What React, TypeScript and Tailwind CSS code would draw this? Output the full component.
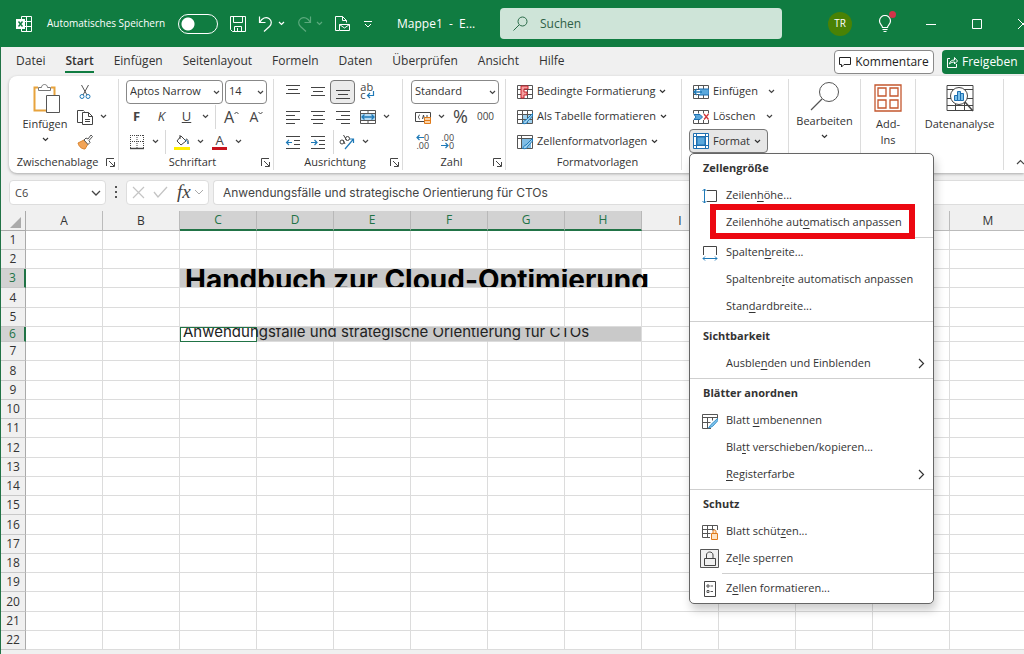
import React from 'react';
import clsx from 'clsx';

type Children = { children?: React.ReactNode };

const Icon: React.FC<Children & { w?: number; h?: number; className?: string }> = ({ w = 16, h = 16, className, children }) => (
  <svg
    width={w}
    height={h}
    viewBox={`0 0 ${w} ${h}`}
    fill="none"
    stroke="currentColor"
    aria-hidden="true"
    className={clsx('shrink-0', className)}
  >
    {children}
  </svg>
);

const Chevron: React.FC<{ className?: string }> = ({ className }) => (
  <Icon w={7} h={5} className={className}>
    <path d="M1 1l2.5 2.5L6 1" strokeWidth="1.2" />
  </Icon>
);

/* ---------- title bar ---------- */

const TitleBar: React.FC = () => (
  <header className="flex h-[47px] shrink-0 items-center bg-[#107c41] pl-4 text-white">
    <Icon className="mr-[15px]">
      <path d="M5.5.5h10v15h-10zM10.5.5v15M5.5 5.5h10M5.5 10.5h10" />
      <rect x="0" y="3" width="9" height="10" fill="#fff" stroke="none" />
      <path d="M2.5 5.500l4 5M6.500 5.500l-4 5" stroke="#107c41" strokeWidth="1.4" />
    </Icon>
    <label htmlFor="autosave" className="w-[131px] whitespace-nowrap text-[10px] font-medium">Automatisches Speichern</label>
    <input
      id="autosave"
      type="checkbox"
      role="switch"
      className="h-5 w-10 shrink-0 appearance-none rounded-full border border-white bg-[radial-gradient(circle_at_9px_9px,white_6px,transparent_7px)]"
    />
    <button aria-label="Speichern" className="ml-3">
      <Icon>
        <path d="M.5.5h15v15h-13l-2-2zM3.500.500v6h9v-6M4.500 15.500v-5h7v5M7.500 12v3" />
      </Icon>
    </button>
    <button aria-label="Rückgängig" className="ml-3 flex items-center gap-1">
      <Icon>
        <path d="M1.500.500v6h6M2 6c2-4 6-5.500 9-3.500s3 5.500.5 8L6 15.500" strokeWidth="1.2" />
      </Icon>
      <Chevron />
    </button>
    <button aria-label="Wiederholen" className="ml-[11px] flex items-center gap-1 text-[#5ba97d]">
      <Icon>
        <path d="M14.500.500v6h-6M14 6c-2-4-6-5.500-9-3.500s-3 5.500-.5 8L10 15.500" strokeWidth="1.2" />
      </Icon>
      <Chevron />
    </button>
    <button aria-label="Per E-Mail senden" className="ml-3">
      <Icon>
        <path d="M4 14.500H.500v-14h7l4 4v2M7.500.500v4h4M4.500 8.500h10v6h-10zM4.500 8.500l5 3.500 5-3.500" />
      </Icon>
    </button>
    <button aria-label="Schnellzugriff anpassen" className="ml-[13px]">
      <Icon w={8} h={8}>
        <path d="M0 1.500h8M1 4l3 3 3-3" />
      </Icon>
    </button>
    <span className="ml-[25px] w-[103px] whitespace-pre text-[12px]">Mappe1  -  E...</span>
    <div className="flex h-[31px] w-[282px] items-center gap-3 rounded-[4px] bg-[#cee4d8] pl-[13px] text-[#2a6a48]">
      <Icon w={15} h={15}>
        <circle cx="9.500" cy="5.500" r="4.500" />
        <path d="M6 9L.5 14.500" />
      </Icon>
      <input
        aria-label="Suchen"
        placeholder="Suchen"
        className="min-w-0 flex-1 bg-transparent text-[12px] outline-none placeholder:text-[#2f6047]"
      />
    </div>
    <div className="ml-auto flex items-center">
      <button className="size-6 rounded-full bg-[#498205] text-[10px]">TR</button>
      <button aria-label="Neuigkeiten" className="relative ml-[26px]">
        <Icon w={14} h={18}>
          <path d="M4.500 12.500c0-2-3-3-3-6.500a5.500 5.500 0 0 1 11 0c0 3.500-3 4.500-3 6.500zM4.500 14.500h5M5.500 16.500h3" strokeWidth="1.2" />
        </Icon>
        <span className="absolute -top-1 -right-1 size-[7px] rounded-full bg-[#d13449]" />
      </button>
      <button aria-label="Minimieren" className="ml-4 flex w-[46px] justify-center">
        <Icon w={10} h={10}><path d="M0 5.500h10" /></Icon>
      </button>
      <button aria-label="Maximieren" className="flex w-[46px] justify-center">
        <Icon w={10} h={10}><path d="M.5.5h9v9h-9z" /></Icon>
      </button>
      <button aria-label="Schließen" className="flex w-6 justify-start overflow-hidden pl-[18px]">
        <Icon w={10} h={10}><path d="M0 0l10 10M10 0L0 10" /></Icon>
      </button>
    </div>
  </header>
);

/* ---------- tabs ---------- */

const tabs = ['Datei', 'Start', 'Einfügen', 'Seitenlayout', 'Formeln', 'Daten', 'Überprüfen', 'Ansicht', 'Hilfe'];

const TabRow: React.FC = () => (
  <nav className="flex h-[29px] shrink-0 items-center pt-px pl-[15px] text-[12px] text-[#333]">
    <div className="flex gap-5">
      {tabs.map((tab) => (
        <a
          key={tab}
          href="#"
          className={clsx('h-[22px] leading-[20px]', tab === 'Start' && 'border-b-2 border-[#107c41] font-semibold')}
        >
          {tab}
        </a>
      ))}
    </div>
    <button className="ml-auto flex h-6 w-[100px] items-center justify-center gap-1 rounded-[4px] border border-[#8a8a8a] bg-white text-[#222]">
      <Icon w={12} h={12}><path d="M.5 1.500h11v7H5L2.500 11V8.500h-2z" /></Icon>
      Kommentare
    </button>
    <button className="ml-2 flex h-6 w-[82px] items-center gap-1 rounded-l-[4px] bg-[#107c41] pl-1 text-white">
      <Icon w={12} h={12}>
        <path d="M4 2.500H1.500v9h9V8M3.500 8c.5-3 2.500-4 5-4V1.500l3 3.500-3 3V6c-2 0-3.500.5-5 2z" />
      </Icon>
      Freigeben
    </button>
  </nav>
);

/* ---------- ribbon ---------- */

const Row: React.FC<Children> = ({ children }) => <div className="flex h-[25px] items-center">{children}</div>;

const Tool: React.FC<Children & { label: string; active?: boolean }> = ({ label, active, children }) => (
  <button
    aria-label={label}
    className={clsx(
      'flex h-6 w-[25px] shrink-0 items-center justify-center text-[#444]',
      active && 'rounded-[4px] border border-[#777] bg-[#ebebeb]'
    )}
  >
    {children}
  </button>
);

const Drop: React.FC<{ label: string }> = ({ label }) => (
  <button aria-label={label} className="flex h-6 w-[13px] shrink-0 items-center justify-center text-[#444]">
    <Chevron />
  </button>
);

const Separator: React.FC = () => <div className="mx-[3px] h-6 w-px bg-[#d8d8d8]" />;

const Select: React.FC<{ label: string; value: string; className: string }> = ({ label, value, className }) => (
  <div className={clsx('relative h-6', className)}>
    <select
      aria-label={label}
      className="block h-full w-full appearance-none rounded-[4px] border border-[#888] bg-white pl-[3px] text-[11px] text-[#333]"
    >
      <option>{value}</option>
    </select>
    <Chevron className="pointer-events-none absolute top-[10px] right-[3px] text-[#444]" />
  </div>
);

const Group: React.FC<Children & { label?: string; className: string; launcher?: boolean }> = ({
  label,
  className,
  launcher,
  children,
}) => (
  <section className={clsx('my-[3px] shrink-0 border-r border-[#dcdcdc]', className)}>
    <div className="h-[75px]">{children}</div>
    {label && (
      <div className="flex h-[17px] items-center pr-[3px] text-[11px] text-[#333]">
        <span className="flex-1 text-center">{label}</span>
        {launcher && (
          <button aria-label={`${label} öffnen`}>
            <Icon w={9} h={9} className="text-[#444]">
              <path d="M.5 8V.5H8M3 3l5 5M8.500 4v4.500H4" />
            </Icon>
          </button>
        )}
      </div>
    )}
  </section>
);

const Lines: React.FC<{ rows: [number, number, number][] }> = ({ rows }) => (
  <Icon>
    {rows.map(([y, from, to]) => (
      <path key={y} d={`M${from} ${y + 0.5}H${to}`} />
    ))}
  </Icon>
);

const GridLines: React.FC = () => <path d="M.5 1.500h15v13H.5zM.5 5.500h15M.5 10.500h15M5.500 1.500v13M10.500 1.500v13" stroke="#555" />;

const Brush: React.FC = () => (
  <path d="M15.500 4.500L9 11c-2 0-2 2-3.500 3.500 3 .5 5 0 5-2L15.500 7z" fill="#9fd0ee" stroke="#1f7ab8" />
);

const ConditionalIcon = () => (
  <Icon>
    <GridLines />
    <path d="M4 2v12h3v-3h3V8H7V5h4V2z" fill="#f4a0a0" stroke="#c8232c" />
  </Icon>
);

const TableFormatIcon = () => (
  <Icon>
    <path d="M6 6h9v8H6z" fill="#9fd0ee" stroke="none" />
    <GridLines />
    <Brush />
  </Icon>
);

const CellStyleIcon = () => (
  <Icon>
    <path d="M4 4h10v10H4z" fill="#7fbce4" stroke="none" />
    <path d="M.5 1.500h15v13H.5zM.5 4.500h15M4.500 1.500v13" stroke="#555" />
    <Brush />
  </Icon>
);

const InsertCellsIcon = () => (
  <Icon>
    <GridLines />
    <path d="M6 5h10v6H6z" fill="#5ba8dc" stroke="#1f6fb0" />
    <path d="M1 6h6v4H1z" fill="#fff" stroke="none" />
    <path d="M9 8H1M4 5L1 8l3 3" stroke="#1f7ab8" strokeWidth="1.4" />
  </Icon>
);

const DeleteCellsIcon = () => (
  <Icon>
    <path d="M.5 1.500h15M.5 14.500h15M.5 1.500v3M5.500 1.500v3M10.500 1.500v3M15.500 1.500v3M.5 11v3.500M5.500 11v3.500M10.500 11v3.500M15.500 11v3.500" stroke="#555" />
    <path d="M1 5.500h6L9.500 8 7 10.500H1L3 8z" fill="#5ba8dc" stroke="#1f6fb0" />
    <path d="M11 5l4.500 5.500M15.500 5L11 10.500" stroke="#d13438" strokeWidth="1.3" />
  </Icon>
);

const FormatCellsIcon = () => (
  <Icon>
    <path d="M.5.5h15v15H.5z" fill="#fff" stroke="#1f6fb0" />
    <path d="M.5 3.500h15M.5 12.500h15M3.500.5v15M12.500.5v15" stroke="#1f6fb0" />
    <path d="M4 4h8v8H4z" fill="#5ba8dc" stroke="#1f6fb0" />
  </Icon>
);

const StyleButton: React.FC<{ icon: React.ReactNode; label: string }> = ({ icon, label }) => (
  <Row>
    <button className="flex items-center gap-1 whitespace-nowrap text-[11px] text-[#333]">
      {icon}
      {label}
      <Chevron />
    </button>
  </Row>
);

const Clipboard: React.FC = () => (
  <Group label="Zwischenablage" launcher className="w-[110px]">
    <div className="flex pl-3">
      <button className="flex w-12 flex-col items-center pt-[5px] text-[11px] text-[#333]">
        <Icon w={28} h={30} className="ml-1">
          <path d="M5 3.500H1.500v23H14M18 3.500h3.500V11" stroke="#e8a33d" strokeWidth="2" />
          <path d="M5.500 6.500v-3h3c0-4 6-4 6 0h3v3z" fill="#fff" stroke="#777" />
          <path d="M13.500 11.500h13v17h-13z" fill="#fff" stroke="#555" />
        </Icon>
        <span className="mt-px leading-[18px]">Einfügen</span>
        <Chevron className="mt-1" />
      </button>
      <div className="pl-[3px]">
        <Row>
          <Tool label="Ausschneiden">
            <Icon>
              <path d="M4.500 1L10 11M11.500 1L6 11" stroke="#555" />
              <circle cx="5" cy="12.500" r="2" stroke="#1f7ab8" />
              <circle cx="11" cy="12.500" r="2" stroke="#1f7ab8" />
            </Icon>
          </Tool>
        </Row>
        <Row>
          <Tool label="Kopieren">
            <Icon>
              <path d="M5 13.500H.500v-12h6l1 1M5.500 3.500h6l4 4v8h-10zM11.500 3.500v4h4M8 10.500h5M8 12.500h5" />
            </Icon>
          </Tool>
          <Drop label="Kopieroptionen" />
        </Row>
        <Row>
          <Tool label="Format übertragen">
            <Icon>
              <path d="M1 9l6-3 4 4-3 5c-3 0-6-2-7-6z" fill="#f2a457" stroke="#d9822b" />
              <path d="M7 6l2-2 2 1 3-4 1.500 1.500-3.500 4 1 2-2 2z" fill="#fff" stroke="#555" />
            </Icon>
          </Tool>
        </Row>
      </div>
    </div>
  </Group>
);

const FontGroup: React.FC = () => (
  <Group label="Schriftart" launcher className="w-[155px] pl-[5px]">
    <Row>
      <Select label="Schriftart" value="Aptos Narrow" className="ml-0.5 w-[97px]" />
      <Select label="Schriftgrad" value="14" className="ml-0.5 w-[42px]" />
    </Row>
    <Row>
      <Tool label="Fett"><span className="text-[13px] font-bold">F</span></Tool>
      <Tool label="Kursiv"><span className="text-[13px] italic">K</span></Tool>
      <Tool label="Unterstrichen"><span className="text-[13px] underline">U</span></Tool>
      <Drop label="Unterstreichungsart" />
      <Separator />
      <Tool label="Schrift vergrößern">
        <span className="text-[16px]">A</span>
        <Icon w={5} h={12}><path d="M.5 3L2.500 1l2 2" /></Icon>
      </Tool>
      <Tool label="Schrift verkleinern">
        <span className="text-[14px]">A</span>
        <Icon w={5} h={12}><path d="M.5 1l2 2 2-2" /></Icon>
      </Tool>
    </Row>
    <Row>
      <Tool label="Rahmen">
        <Icon>
          <path d="M1.500 1v13M14.500 1v13M1 1.500h13M8 1v13M1 7.500h13" strokeDasharray="1 1" />
          <path d="M1 14.500h14" strokeWidth="1.4" />
        </Icon>
      </Tool>
      <Drop label="Rahmenart" />
      <Separator />
      <Tool label="Füllfarbe">
        <Icon>
          <path d="M7 2l5 5-5 4-4-4zM6 1v4M12 5c2 0 2.500 2 2 5" />
          <path d="M11 6c2 0 3 2 3 4" stroke="#1f7ab8" />
          <path d="M0 14.500h16" stroke="#ffee00" strokeWidth="3" />
        </Icon>
      </Tool>
      <Drop label="Füllfarbe wählen" />
      <Tool label="Schriftfarbe">
        <span className="border-b-[3px] border-[#c8141e] px-[3px] text-[13px] leading-[14px]">A</span>
      </Tool>
      <Drop label="Schriftfarbe wählen" />
    </Row>
  </Group>
);

const Alignment: React.FC = () => (
  <Group label="Ausrichtung" launcher className="w-[129px] pl-[6px]">
    <Row>
      <Tool label="Oben ausrichten"><Lines rows={[[1, 1, 15], [5, 3, 13], [9, 1, 15]]} /></Tool>
      <Tool label="Zentriert ausrichten"><Lines rows={[[3, 1, 15], [7, 3, 13], [11, 1, 15]]} /></Tool>
      <Tool label="Unten ausrichten" active><Lines rows={[[6, 1, 15], [10, 3, 13], [14, 1, 15]]} /></Tool>
      <Tool label="Textumbruch">
        <div className="text-left text-[11px] leading-[8px]">
          ab
          <span className="flex">
            c
            <Icon w={9} h={9}>
              <path d="M7.500 0v4.500h-6M4 2L1.500 4.500 4 7" stroke="#1f7ab8" strokeWidth="1.2" />
            </Icon>
          </span>
        </div>
      </Tool>
    </Row>
    <Row>
      <Tool label="Linksbündig"><Lines rows={[[2, 1, 15], [6, 1, 10], [10, 1, 15], [14, 1, 10]]} /></Tool>
      <Tool label="Zentriert"><Lines rows={[[2, 1, 15], [6, 3, 13], [10, 1, 15], [14, 3, 13]]} /></Tool>
      <Tool label="Rechtsbündig"><Lines rows={[[2, 1, 15], [6, 6, 15], [10, 1, 15], [14, 6, 15]]} /></Tool>
      <Tool label="Verbinden und zentrieren">
        <Icon>
          <path d="M1 4.500h14v7H1z" fill="#b5daf2" stroke="none" />
          <path d="M.5 1.500h15v13H.5zM.5 4.500h15M.5 11.500h15M8 1.500v3M8 11.500v3" stroke="#555" />
          <path d="M2 8h12M4.500 5.500L2 8l2.500 2.500M11.500 5.500L14 8l-2.500 2.500" stroke="#1f7ab8" strokeWidth="1.3" />
        </Icon>
      </Tool>
      <Drop label="Verbindungsoptionen" />
    </Row>
    <Row>
      <Tool label="Einzug verkleinern">
        <Icon>
          <path d="M1 2.500h14M9 6.500h6M9 10.500h6M1 14.500h14" />
          <path d="M7 8.500H1.500M4 6L1.500 8.500 4 11" stroke="#1f7ab8" strokeWidth="1.2" />
        </Icon>
      </Tool>
      <Tool label="Einzug vergrößern">
        <Icon>
          <path d="M1 2.500h14M9 6.500h6M9 10.500h6M1 14.500h14" />
          <path d="M1 8.500h6M4.500 6L7 8.500 4.500 11" stroke="#1f7ab8" strokeWidth="1.2" />
        </Icon>
      </Tool>
      <div className="ml-[3px] h-6 w-px bg-[#d8d8d8]" />
      <Tool label="Orientierung">
        <Icon>
          <path d="M6 15L14.500 5M14.500 9V5h-4" stroke="#1f7ab8" strokeWidth="1.2" />
          <circle cx="3" cy="8" r="2" />
          <path d="M4 6l2 4" />
          <circle cx="8.500" cy="4.500" r="2" />
          <path d="M4.500 1l3 5" />
        </Icon>
      </Tool>
      <Drop label="Orientierung wählen" />
    </Row>
  </Group>
);

const NumberGroup: React.FC = () => (
  <Group label="Zahl" launcher className="w-[103px] pl-[7px]">
    <Row>
      <Select label="Zahlenformat" value="Standard" className="ml-px w-[88px]" />
    </Row>
    <Row>
      <Tool label="Buchhaltungszahlenformat">
        <Icon>
          <path d="M.5 3.500h15v9H.5z" />
          <path d="M5 6c-2 0-2 4 0 4M7.500 10l1-4 1 4M12 6v4" />
          <path d="M9.500 8.500h6v6h-6zM9.500 11.500h6" fill="#fbd3a8" stroke="#e07b1a" />
        </Icon>
      </Tool>
      <Drop label="Währung wählen" />
      <Tool label="Prozentformat"><span className="text-[18px]">%</span></Tool>
      <Tool label="1000er-Trennzeichen"><span className="text-[10px]">000</span></Tool>
    </Row>
    <Row>
      <Tool label="Dezimalstelle hinzufügen">
        <div className="text-right text-[9px] leading-[8px]">
          <span className="flex items-center">
            <Icon w={8} h={7}><path d="M8 3.500H1M3.500 1L1 3.500 3.500 6" stroke="#1f7ab8" strokeWidth="1.2" /></Icon>0
          </span>
          .00
        </div>
      </Tool>
      <Tool label="Dezimalstelle entfernen">
        <div className="text-right text-[9px] leading-[8px]">
          .00
          <span className="flex items-center">
            <Icon w={8} h={7}><path d="M0 3.500h7M4.500 1L7 3.500 4.500 6" stroke="#1f7ab8" strokeWidth="1.2" /></Icon>0
          </span>
        </div>
      </Tool>
    </Row>
  </Group>
);

/* ---------- format menu ---------- */

const RowHeightIcon = () => (
  <Icon>
    <path d="M5 2.500h9.500v11H5" stroke="#444" />
    <path d="M2.500 1v14M.5 3l2-2 2 2M.5 13l2 2 2-2" stroke="#1f7ab8" />
  </Icon>
);

const ColumnWidthIcon = () => (
  <Icon>
    <path d="M1.500 10V1.500h13V10" stroke="#444" />
    <path d="M1 13.500h14M3 11.500l-2 2 2 2M13 11.500l2 2-2 2" stroke="#1f7ab8" />
  </Icon>
);

const RenameIcon = () => (
  <Icon>
    <path d="M9 15.500H.5v-14h15V6M.5 4.500h15M.5 9.500h8M5.500 4.500v11M10.500 4.500v3" stroke="#555" />
    <path d="M15.500 5.500L9 11.500 6.500 15l4-1.500 5.500-6z" fill="#7cc0ea" stroke="#3d95cc" />
  </Icon>
);

const ProtectIcon = () => (
  <Icon>
    <path d="M8 13.500H.5v-12h15V6M.5 5.500h12M.5 9.500h8M5.500 1.500v12M10.500 1.500v5" stroke="#555" />
    <path d="M9.500 9.500h6v6h-6zM11 9.500V7.500c0-2 3-2 3 0v2" fill="#fde3c4" stroke="#e07b1a" />
  </Icon>
);

const LockIcon = () => (
  <Icon w={20} h={20}>
    <path d="M.5.5h18v18H.5z" fill="#f0f0f0" stroke="#555" />
    <path d="M4.500 9.500h11v7h-11zM6.500 9.500V6c0-4 6.500-4 6.500 0v3.500" stroke="#444" />
  </Icon>
);

const FormatDialogIcon = () => (
  <Icon>
    <path d="M2.500.5h11v15h-11z" stroke="#444" />
    <path d="M5 4h2v2H5zM5 9.500h2v2H5zM8.500 5h2.500M8.500 10.500h2.500" stroke="#555" />
  </Icon>
);

const MenuTitle: React.FC<Children> = ({ children }) => (
  <h3 className="flex h-7 items-center pl-[13px] text-[11px] font-bold">{children}</h3>
);

type MenuItemProps = { icon?: React.ReactNode; label: [string, string, string]; submenu?: boolean; marked?: boolean };

// label is split around the underlined access key
const MenuItem: React.FC<MenuItemProps> = ({ icon, label: [before, key, after], submenu, marked }) => (
  <button role="menuitem" className="relative flex h-[27px] w-full items-center whitespace-nowrap pr-2 text-[11px]">
    <span className="ml-1 flex w-8 justify-center">{icon}</span>
    <span className="flex-1 text-left">
      {before}
      <u className="underline-offset-2">{key}</u>
      {after}
    </span>
    {submenu && (
      <Icon w={7} h={11}><path d="M1 1l4.500 4.500L1 10" strokeWidth="1.2" /></Icon>
    )}
    {marked && <span className="absolute -top-[5px] right-[18px] -bottom-[3px] left-5 border-[6px] border-[#ec0811]" />}
  </button>
);

const MenuSection: React.FC<Children> = ({ children }) => (
  <div className="border-[#cfcfcf] pb-px not-first:border-t">{children}</div>
);

const MenuDivider: React.FC = () => <div className="my-px ml-8 h-px bg-[#cfcfcf]" />;

const FormatMenu: React.FC = () => (
  <div
    role="menu"
    className="absolute top-full left-0 z-10 w-[245px] rounded-[5px] border border-[#666] bg-white text-[#333] shadow-[2px_6px_10px_rgba(0,0,0,0.2)]"
  >
    <MenuSection>
      <MenuTitle>Zellengröße</MenuTitle>
      <MenuItem icon={<RowHeightIcon />} label={['Zeilen', 'h', 'öhe...']} />
      <MenuItem label={['Zeilenhöhe aut', 'o', 'matisch anpassen']} marked />
      <MenuDivider />
      <MenuItem icon={<ColumnWidthIcon />} label={['Spalten', 'b', 'reite...']} />
      <MenuItem label={['Spaltenbre', 'i', 'te automatisch anpassen']} />
      <MenuItem label={['Stan', 'd', 'ardbreite...']} />
    </MenuSection>
    <MenuSection>
      <MenuTitle>Sichtbarkeit</MenuTitle>
      <MenuItem label={['Ausble', 'n', 'den und Einblenden']} submenu />
    </MenuSection>
    <MenuSection>
      <MenuTitle>Blätter anordnen</MenuTitle>
      <MenuItem icon={<RenameIcon />} label={['Blatt ', 'u', 'mbenennen']} />
      <MenuItem label={['Bla', 't', 't verschieben/kopieren...']} />
      <MenuItem label={['', 'R', 'egisterfarbe']} submenu />
    </MenuSection>
    <MenuSection>
      <MenuTitle>Schutz</MenuTitle>
      <MenuItem icon={<ProtectIcon />} label={['Blatt schüt', 'z', 'en...']} />
      <MenuItem icon={<LockIcon />} label={['Ze', 'l', 'le sperren']} />
      <MenuDivider />
      <MenuItem icon={<FormatDialogIcon />} label={['Z', 'e', 'llen formatieren...']} />
    </MenuSection>
  </div>
);

const CellsGroup: React.FC = () => (
  <Group className="w-[107px] pl-[7px] text-[11px] text-[#333]">
    <Row>
      <button className="flex w-[76px] items-center gap-1 pl-1"><InsertCellsIcon />Einfügen</button>
      <Drop label="Einfügeoptionen" />
    </Row>
    <Row>
      <button className="flex w-[74px] items-center gap-1 pl-1"><DeleteCellsIcon />Löschen</button>
      <Drop label="Löschoptionen" />
    </Row>
    <div className="relative">
      <button
        aria-expanded="true"
        className="flex h-6 w-[79px] items-center gap-1 rounded-[4px] border border-[#777] bg-[#e6e6e6] pl-[3px]"
      >
        <FormatCellsIcon />
        Format
        <Chevron />
      </button>
      <FormatMenu />
    </div>
  </Group>
);

const Ribbon: React.FC = () => (
  <div className="ml-2 flex h-[97px] shrink-0 rounded-l-[8px] bg-white shadow-[0_1px_3px_rgba(0,0,0,0.3)]">
    <Clipboard />
    <FontGroup />
    <Alignment />
    <NumberGroup />
    <Group label="Formatvorlagen" className="w-[176px] pl-[11px]">
      <StyleButton icon={<ConditionalIcon />} label="Bedingte Formatierung" />
      <StyleButton icon={<TableFormatIcon />} label="Als Tabelle formatieren" />
      <StyleButton icon={<CellStyleIcon />} label="Zellenformatvorlagen" />
    </Group>
    <CellsGroup />
    <Group className="w-[72px]">
      <button className="flex w-full flex-col items-center pt-[3px] text-[11px] text-[#333]">
        <Icon w={30} h={30}>
          <circle cx="19" cy="10" r="9.500" stroke="#555" />
          <path d="M12 17L1 28" stroke="#555" strokeWidth="1.3" />
        </Icon>
        <span className="leading-[18px]">Bearbeiten</span>
        <Chevron className="mt-1" />
      </button>
    </Group>
    <Group className="w-[55px]">
      <button className="flex w-full flex-col items-center gap-1 pt-[5px] text-[11px] leading-4 text-[#333]">
        <Icon w={28} h={28}>
          <path d="M1 1h26v26H1zM4 4h8v8H4zM16 4h8v8h-8zM4 16h8v8H4zM16 16h8v8h-8z" stroke="#c4572e" strokeWidth="1.3" />
        </Icon>
        <span>Add-<br />Ins</span>
      </button>
    </Group>
    <Group className="w-[88px]">
      <button className="flex w-full flex-col items-center gap-1 pt-[5px] text-[11px] leading-4 text-[#333]">
        <Icon w={28} h={28}>
          <path d="M1 1.500h26v25H1zM1 5.500h26M1 14.500h26M1 21.500h26M9.500 19v8M18.500 19v8" stroke="#444" />
          <circle cx="13" cy="12" r="8.500" fill="#fff" stroke="#444" />
          <path d="M19 18l8 9" stroke="#444" strokeWidth="1.500" />
          <path d="M8.500 11.500h3v5h-3zM11.500 7.500h3v9h-3zM14.500 9.500h3v7h-3z" fill="#7cc0ea" stroke="#1f6fb0" />
        </Icon>
        Datenanalyse
      </button>
    </Group>
    <button aria-label="Menüband reduzieren" className="ml-auto self-end overflow-hidden pb-2 text-[#444]">
      <Icon w={8} h={6}><path d="M1 5l3.500-3.500L8 5" strokeWidth="1.200" /></Icon>
    </button>
  </div>
);

/* ---------- formula bar ---------- */

const FormulaBar: React.FC = () => (
  <div className="flex h-[38px] shrink-0 items-center pl-2 text-[#444]">
    <div className="relative h-[25px] w-[97px]">
      <input
        aria-label="Namenfeld"
        defaultValue="C6"
        className="block h-full w-full rounded-[4px] border border-[#ddd] bg-white pl-[5px] text-[11px] outline-none"
      />
      <Icon w={10} h={6} className="pointer-events-none absolute top-[10px] right-[5px]">
        <path d="M1 1l4 4 4-4" strokeWidth="1.300" />
      </Icon>
    </div>
    <Icon w={4} h={12} className="mx-2">
      <path d="M1 0h2v2H1zM1 5h2v2H1zM1 10h2v2H1z" fill="#555" stroke="none" />
    </Icon>
    <div className="flex h-[25px] w-[83px] items-center gap-2 rounded-[4px] border border-[#ddd] bg-white pl-[5px]">
      <button aria-label="Abbrechen" className="text-[#c4c4c4]">
        <Icon w={13} h={13}><path d="M1 1l11 11M12 1L1 12" strokeWidth="1.200" /></Icon>
      </button>
      <button aria-label="Eingeben" className="text-[#c4c4c4]">
        <Icon w={15} h={12}><path d="M1 6l4 5L14 1" strokeWidth="1.300" /></Icon>
      </button>
      <button aria-label="Funktion einfügen" className="flex items-center gap-1 pl-px font-['Liberation_Serif',serif] text-[19px] leading-6 italic">
        fx
        <Icon w={8} h={6} className="text-[#aaa]"><path d="M0 1l4 4 4-4" /></Icon>
      </button>
    </div>
    <input
      aria-label="Bearbeitungsleiste"
      defaultValue="Anwendungsfälle und strategische Orientierung für CTOs"
      className="ml-1 h-[25px] flex-1 rounded-l-[4px] border border-r-0 border-[#ddd] bg-white pl-[9px] font-['Inter',sans-serif] text-[12px] outline-none"
    />
  </div>
);

/* ---------- sheet ---------- */

const columns = ['A', 'B', 'C', 'D', 'E', 'F', 'G', 'H', 'I', 'J', 'K', 'L', 'M'];
const rowNumbers = Array.from({ length: 22 }, (_, i) => i + 1);
const isSelectedColumn = (col: string) => col >= 'C' && col <= 'H';
const isSelectedRow = (row: number) => row === 3 || row === 6;

const rowHeight = (row: number) => {
  if (row === 6) return 'h-[15px]';
  return row % 4 === 0 ? 'h-5' : 'h-[19px]';
};

// zero-width boxes let the text run over the neighbouring cells but stay cut at the row's edges
const CellContent: React.FC<{ col: string; row: number }> = ({ col, row }) => {
  if (col !== 'C') return null;
  if (row === 3) {
    return (
      <div className="h-[18px] w-0 overflow-x-visible overflow-y-clip pl-[5px] font-['Inter',sans-serif] text-[28px] leading-[22px] font-bold whitespace-nowrap text-black">
        Handbuch zur Cloud-Optimierung
      </div>
    );
  }
  if (row === 6) {
    return (
      <div className="h-[13px] w-0 overflow-x-visible overflow-y-clip pl-[2px] font-['Inter',sans-serif] text-[15px] leading-[8px] whitespace-nowrap text-[#222]">
        Anwendungsfälle und strategische Orientierung für CTOs
      </div>
    );
  }
  return null;
};

const Sheet: React.FC = () => (
  <div className="min-h-0 flex-1 overflow-hidden">
    <table className="w-max border-separate border-spacing-0 bg-white text-[12px] text-[#333]">
      <thead>
        <tr className="h-5 bg-[#f0f0f0]">
          <th className="w-[25px] border-r border-b border-[#aaa] p-0">
            <Icon w={12} h={12} className="mt-1 ml-auto mr-[3px]"><path d="M11 0v11H0z" fill="#aaa" stroke="none" /></Icon>
          </th>
          {columns.map((col) => (
            <th
              key={col}
              className={clsx(
                'w-[77px] border-r p-0 leading-[18px] font-normal',
                isSelectedColumn(col)
                  ? 'border-b-2 border-r-[#b8b8b8] border-b-[#217346] bg-[#d2d2d2] text-[#217346]'
                  : 'border-b border-[#bbb]'
              )}
            >
              {col}
            </th>
          ))}
        </tr>
      </thead>
      <tbody>
        {rowNumbers.map((row) => (
          <tr key={row} className={rowHeight(row)}>
            <th
              className={clsx(
                'border-b border-b-[#c8c8c8] p-0 leading-[14px] font-normal',
                isSelectedRow(row)
                  ? 'border-r-2 border-r-[#217346] bg-[#d2d2d2] text-[#217346]'
                  : 'border-r border-r-[#aaa] bg-[#f0f0f0]'
              )}
            >
              {row}
            </th>
            {columns.map((col) => {
              const active = col === 'C' && row === 6;
              const selected = isSelectedRow(row) && isSelectedColumn(col);
              return (
                <td
                  key={col}
                  className={clsx(
                    'p-0 align-top',
                    active && 'border border-[#217346]',
                    !active && 'border-r border-b border-b-[#dcdcdc]',
                    !active && selected && 'bg-[#c9c9c9]',
                    !active && (selected && col !== 'H' ? 'border-r-[#c9c9c9]' : 'border-r-[#dcdcdc]')
                  )}
                >
                  <CellContent col={col} row={row} />
                </td>
              );
            })}
          </tr>
        ))}
      </tbody>
    </table>
  </div>
);

export default function App() {
  return (
    <div className="flex h-screen flex-col overflow-hidden bg-[#f0f0f0] font-['Open_Sans',sans-serif]">
      <TitleBar />
      <div className="flex min-h-0 flex-1 flex-col border-l border-[#217346]">
        <TabRow />
        <Ribbon />
        <FormulaBar />
        <Sheet />
      </div>
    </div>
  );
}
